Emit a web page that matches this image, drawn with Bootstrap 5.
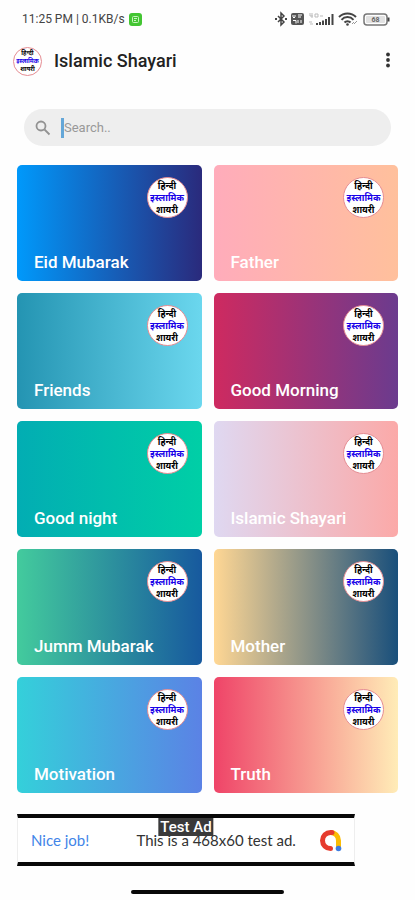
<!DOCTYPE html>
<html lang="en">
<head>
<meta charset="utf-8">
<meta name="viewport" content="width=device-width, initial-scale=1">
<title>Islamic Shayari</title>
<link href="https://cdn.jsdelivr.net/npm/bootstrap@5.3.0/dist/css/bootstrap.min.css" rel="stylesheet">
<style>
body { font-family: Roboto, "Noto Sans", sans-serif; background: #fefefe; color: #222; }
.status-bar { height: 38px; padding: 0 24px 0 22px; font-size: 12px; color: #444; }
.status-bar svg { display: block; }
.app-bar { height: 46px; padding: 0 17px 0 13px; }
.app-title { font: 500 18px/24px Roboto, sans-serif; margin: 0 0 0 12px; color: #222; }
.more-btn { width: 20px; height: 32px; }
.search-pill { height: 37px; margin: 25px 24px 19px; padding: 0 11px; gap: 10px; background: #eee; }
.search-pill input { font-size: 13px; line-height: 20px; height: 20px; color: #555; caret-color: #4d9ad5; border-left: 3px solid #65a7d8; }
.search-pill input::placeholder { color: #999; opacity: 1; }
.search-pill input:focus { outline: 0; }
.topics { padding: 0 17px; gap: 12px; display: grid; grid-template-columns: 1fr 1fr; }
.topic { height: 116px; border-radius: 5px; padding: 12px 14px 7px 17px; background: linear-gradient(90deg, var(--from), var(--to)); }
.topic-name { font: 500 17px/24px Roboto, sans-serif; color: #fff; }
.seal { width: 41px; height: 41px; border: 1px solid #e58c92; background: #fff; font: 700 9px/12px "Noto Sans", "Noto Sans Devanagari", "Lohit Devanagari", sans-serif; color: #000; white-space: nowrap; flex: none; }
.seal .mid { color: #1700e8; }
.seal-sm { width: 29px; height: 29px; font-size: 6px; line-height: 8px; }
.t-eid { --from: #0099fb; --to: #2a2a7c; }
.t-father { --from: #ffacbb; --to: #ffc09c; }
.t-friends { --from: #2494b2; --to: #6bd7ee; }
.t-morning { --from: #ce2a60; --to: #6b3b8e; }
.t-night { --from: #02adb3; --to: #00cfa6; }
.t-islamic { --from: #dfd8f1; --to: #fba9a8; }
.t-jumm { --from: #43cb9d; --to: #17599e; }
.t-mother { --from: #ffd794; --to: #194f7b; }
.t-motivation { --from: #34d0da; --to: #5b82e5; }
.t-truth { --from: #ef4468; --to: #ffecb7; }
.ad { width: calc(100% - 77px); height: 52px; margin: 21px 0 0 17px; padding: 0 12px 0 13px; border: 1px solid #eee; border-top: 4px solid #080808; border-bottom: 4px solid #080808; background: #fff; font: 15px/20px Lato, sans-serif; color: #333; text-decoration: none; }
.ad .praise { color: #4285e8; }
.ad-tag { top: 0; left: 50%; transform: translateX(-50%); background: #3a3a3a; color: #fff; font: 500 15px/18px Roboto, sans-serif; padding: 0 2px; white-space: nowrap; }
.home-bar { width: 153px; height: 4px; margin: 24px auto 0; background: #080808; }
</style>
</head>
<body>
<div class="status-bar d-flex align-items-center">
  <span>11:25 PM | 0.1KB/s</span>
  <svg class="ms-1" width="13" height="13" viewBox="0 0 13 13" aria-hidden="true"><rect width="13" height="13" rx="3" fill="#43c532"/><rect x="3.500" y="3.500" width="6" height="6" rx="1" fill="none" stroke="#c8f3bf"/><path d="M5 5.500h3M5 7.500h2" stroke="#c8f3bf"/></svg>
  <svg class="ms-auto" width="118" height="16" viewBox="0 0 118 16" role="img" aria-label="Bluetooth, mobile data, Wi-Fi, battery 68" fill="none" stroke="#444">
    <path d="M5 5l6 6-3 3V2l3 3-6 6" stroke-width="1.500"/><path d="M2 8h2M12 8h2" stroke-width="1.800"/>
    <rect x="18" y="2" width="13" height="12" rx="2" fill="#555" stroke="none"/><path d="M20 4v2l1 1 1-1V4M25 4h4M25 6h3M20 9.500h3v3M25 9v3M28 9v3" stroke="#fff"/>
    <path d="M37 2v3h3M39 2v5M42 3h3v3h-3zM47 5h3M36 11h3M37 13h3" stroke="#bbb"/>
    <path d="M44 14v-2M47 14v-3M50 14V9.500M53 14V8M56 14V6M59.500 14V3" stroke-width="2"/>
    <path d="M66 6a12 12 0 0 1 17 0M68.500 8.800a8 8 0 0 1 12 0M71.500 11.500a4 4 0 0 1 6 0" stroke-width="2"/><circle cx="74.500" cy="13.500" r="1.300" fill="#444" stroke="none"/><path d="M79 13l2-2M81 13l3-3" stroke="#999"/>
    <rect x="91" y="3" width="23" height="11" rx="3" stroke="#777" stroke-width="1.500"/><rect x="93" y="5" width="19" height="7" rx="1" fill="#e2e2e2" stroke="none"/><path d="M115.500 6.500v4" stroke-width="2"/><text x="102.500" y="11" text-anchor="middle" font-family="Roboto, sans-serif" font-size="7" font-weight="700" fill="#666" stroke="none">68</text>
  </svg>
</div>

<header class="app-bar d-flex align-items-center">
  <div class="seal seal-sm rounded-circle d-flex flex-column align-items-center justify-content-center" lang="hi"><span>हिन्दी</span><span class="mid">इस्लामिक</span><span>शायरी</span></div>
  <h1 class="app-title">Islamic Shayari</h1>
  <button class="more-btn btn p-0 border-0 ms-auto d-flex align-items-center justify-content-center" type="button" aria-label="More options">
    <svg width="6" height="18" viewBox="0 0 6 18" fill="#333" aria-hidden="true"><circle cx="3" cy="2.500" r="1.900"/><circle cx="3" cy="8" r="1.900"/><circle cx="3" cy="13.500" r="1.900"/></svg>
  </button>
</header>

<main>
  <form class="search-pill rounded-pill d-flex align-items-center" role="search">
    <label for="q" class="d-flex"><svg width="16" height="16" viewBox="0 0 16 16" fill="none" stroke="#929292" stroke-width="1.800" role="img" aria-label="Search"><circle cx="6" cy="6" r="4.500"/><path d="M9.500 9.500l5 5"/></svg></label>
    <input id="q" class="bg-transparent border-top-0 border-end-0 border-bottom-0 p-0 flex-grow-1" type="text" placeholder="Search..">
  </form>

  <div class="topics">
    <a href="#eid" class="topic t-eid d-flex flex-column justify-content-between text-decoration-none"><span class="seal rounded-circle align-self-end d-flex flex-column align-items-center justify-content-center" lang="hi"><span>हिन्दी</span><span class="mid">इस्लामिक</span><span>शायरी</span></span><span class="topic-name">Eid Mubarak</span></a>
    <a href="#father" class="topic t-father d-flex flex-column justify-content-between text-decoration-none"><span class="seal rounded-circle align-self-end d-flex flex-column align-items-center justify-content-center" lang="hi"><span>हिन्दी</span><span class="mid">इस्लामिक</span><span>शायरी</span></span><span class="topic-name">Father</span></a>
    <a href="#friends" class="topic t-friends d-flex flex-column justify-content-between text-decoration-none"><span class="seal rounded-circle align-self-end d-flex flex-column align-items-center justify-content-center" lang="hi"><span>हिन्दी</span><span class="mid">इस्लामिक</span><span>शायरी</span></span><span class="topic-name">Friends</span></a>
    <a href="#morning" class="topic t-morning d-flex flex-column justify-content-between text-decoration-none"><span class="seal rounded-circle align-self-end d-flex flex-column align-items-center justify-content-center" lang="hi"><span>हिन्दी</span><span class="mid">इस्लामिक</span><span>शायरी</span></span><span class="topic-name">Good Morning</span></a>
    <a href="#night" class="topic t-night d-flex flex-column justify-content-between text-decoration-none"><span class="seal rounded-circle align-self-end d-flex flex-column align-items-center justify-content-center" lang="hi"><span>हिन्दी</span><span class="mid">इस्लामिक</span><span>शायरी</span></span><span class="topic-name">Good night</span></a>
    <a href="#islamic" class="topic t-islamic d-flex flex-column justify-content-between text-decoration-none"><span class="seal rounded-circle align-self-end d-flex flex-column align-items-center justify-content-center" lang="hi"><span>हिन्दी</span><span class="mid">इस्लामिक</span><span>शायरी</span></span><span class="topic-name">Islamic Shayari</span></a>
    <a href="#jumm" class="topic t-jumm d-flex flex-column justify-content-between text-decoration-none"><span class="seal rounded-circle align-self-end d-flex flex-column align-items-center justify-content-center" lang="hi"><span>हिन्दी</span><span class="mid">इस्लामिक</span><span>शायरी</span></span><span class="topic-name">Jumm Mubarak</span></a>
    <a href="#mother" class="topic t-mother d-flex flex-column justify-content-between text-decoration-none"><span class="seal rounded-circle align-self-end d-flex flex-column align-items-center justify-content-center" lang="hi"><span>हिन्दी</span><span class="mid">इस्लामिक</span><span>शायरी</span></span><span class="topic-name">Mother</span></a>
    <a href="#motivation" class="topic t-motivation d-flex flex-column justify-content-between text-decoration-none"><span class="seal rounded-circle align-self-end d-flex flex-column align-items-center justify-content-center" lang="hi"><span>हिन्दी</span><span class="mid">इस्लामिक</span><span>शायरी</span></span><span class="topic-name">Motivation</span></a>
    <a href="#truth" class="topic t-truth d-flex flex-column justify-content-between text-decoration-none"><span class="seal rounded-circle align-self-end d-flex flex-column align-items-center justify-content-center" lang="hi"><span>हिन्दी</span><span class="mid">इस्लामिक</span><span>शायरी</span></span><span class="topic-name">Truth</span></a>
  </div>
</main>

<a href="#ad" class="ad position-relative d-flex align-items-center justify-content-between">
  <span class="praise">Nice job!</span>
  <span class="ms-4">This is a 468x60 test ad.</span>
  <svg width="23" height="23" viewBox="0 0 23 23" fill="none" stroke-width="5" aria-hidden="true"><path d="M11.500 3.500A8 8 0 0 1 19.500 11.500V18" stroke="#fbbc04"/><path d="M13 3.500H11.500a8 8 0 0 0 0 16" stroke="#e63b2e" stroke-linecap="round"/><circle cx="19.500" cy="19.500" r="2.800" fill="#3f7de0" stroke="none"/></svg>
  <span class="ad-tag position-absolute">Test Ad</span>
</a>
<div class="home-bar rounded-pill"></div>
<script src="https://cdn.jsdelivr.net/npm/bootstrap@5.3.0/dist/js/bootstrap.bundle.min.js"></script>
</body>
</html>
